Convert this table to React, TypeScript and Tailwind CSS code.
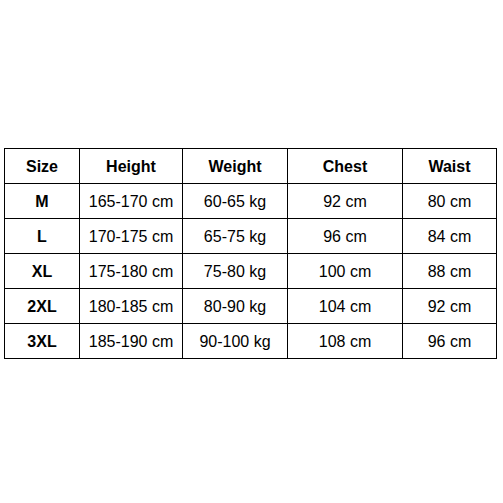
import { Fragment } from 'react';

const rows = [
  { size: 'M', height: '165-170 cm', weight: '60-65 kg', chest: '92 cm', waist: '80 cm' },
  { size: 'L', height: '170-175 cm', weight: '65-75 kg', chest: '96 cm', waist: '84 cm' },
  { size: 'XL', height: '175-180 cm', weight: '75-80 kg', chest: '100 cm', waist: '88 cm' },
  { size: '2XL', height: '180-185 cm', weight: '80-90 kg', chest: '104 cm', waist: '92 cm' },
  { size: '3XL', height: '185-190 cm', weight: '90-100 kg', chest: '108 cm', waist: '96 cm' },
];

const headers = ['Size', 'Height', 'Weight', 'Chest', 'Waist'];

const Cell = ({ children, bold }: { children: React.ReactNode; bold?: boolean }) => (
  <div
    className={`h-[35px] pt-[2px] border-l border-t border-black flex items-center justify-center text-[16px] text-black ${
      bold ? 'font-bold' : ''
    }`}
  >
    {children}
  </div>
);

export default function App() {
  return (
    <div
      className="w-[503px] h-[503px] bg-white overflow-hidden pt-[148px] pl-[4px]"
      style={{ fontFamily: '"Liberation Sans", Arial, sans-serif' }}
    >
      {/* Size chart */}
      <div className="w-[493px] grid grid-cols-[75px_103px_105px_115px_94px] border-r border-b border-black">
        {headers.map((h) => (
          <Cell key={h} bold>
            {h}
          </Cell>
        ))}
        {rows.map((r) => (
          <Fragment key={r.size}>
            <Cell bold>{r.size}</Cell>
            <Cell>{r.height}</Cell>
            <Cell>{r.weight}</Cell>
            <Cell>{r.chest}</Cell>
            <Cell>{r.waist}</Cell>
          </Fragment>
        ))}
      </div>
    </div>
  );
}
